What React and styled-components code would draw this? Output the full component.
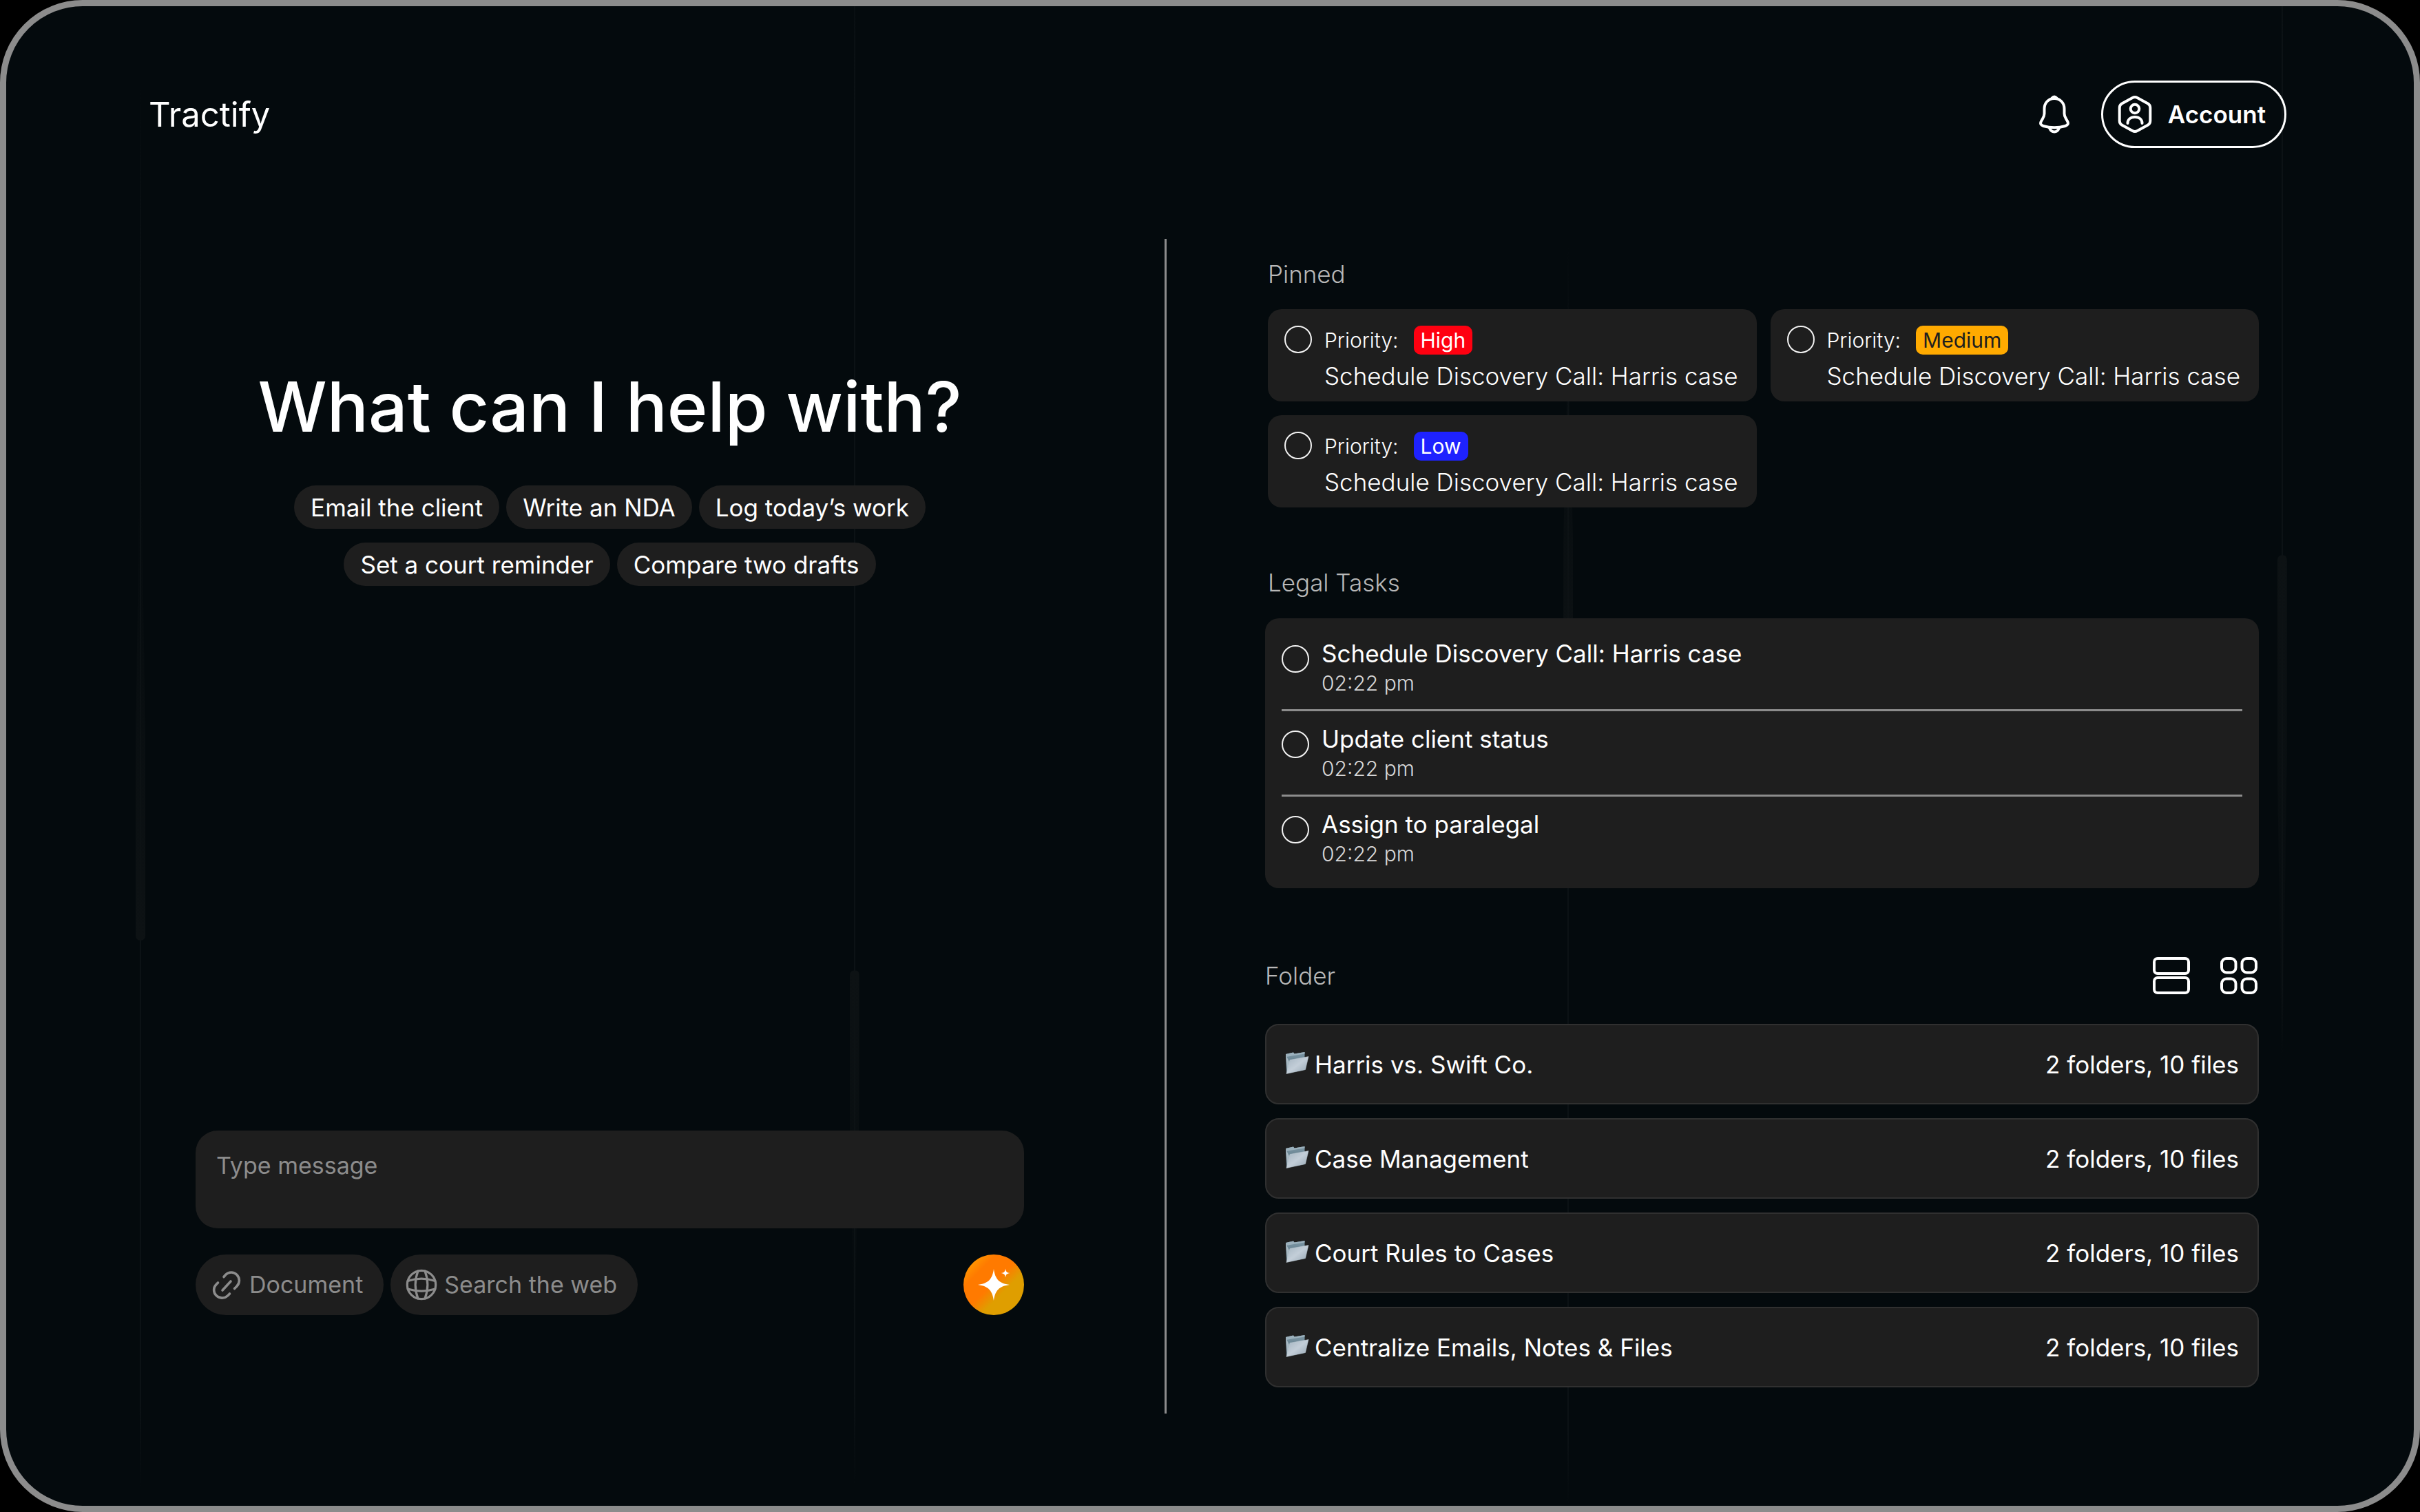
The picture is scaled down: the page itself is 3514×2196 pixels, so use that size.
import React, { useState } from "react";
import styled, { createGlobalStyle } from "styled-components";

const GlobalStyle = createGlobalStyle`
  *, *::before, *::after { box-sizing: border-box; }
  body {
    margin: 0;
    background: #000;
    color: #fff;
    font-family: Inter, "Noto Sans", sans-serif;
    font-size: 35px;
    line-height: 44px;
  }
  button, textarea, input { font: inherit; color: inherit; margin: 0; }
  button { cursor: pointer; border: 0; padding: 0; background: none; }
  ul, h1, h2, p { margin: 0; padding: 0; list-style: none; font-weight: inherit; }
  a { color: inherit; text-decoration: none; }
`;

const Frame = styled.div`
  position: relative;
  isolation: isolate;
  overflow: hidden;
  min-height: 100vh;
  display: flex;
  flex-direction: column;
  padding: 108px 0 134px;
  background: #040a0d;
  border: 9px solid #8c8c8c;
  border-radius: 120px;
`;

const Backdrop = styled.div`
  position: absolute;
  inset: 0;
  z-index: -1;
`;

const Rail = styled.span`
  position: absolute;
  left: ${(p) => p.$left};
  top: ${(p) => p.$from};
  bottom: ${(p) => p.$to};
  width: 2px;
  background: linear-gradient(transparent, #0c1215 15%, #0c1215 94%, transparent);
`;

const Beam = styled.span`
  position: absolute;
  left: ${(p) => p.$left};
  top: ${(p) => p.$top};
  height: ${(p) => p.$height};
  width: 14px;
  margin-left: -6px;
  border-radius: 7px;
  background: linear-gradient(${(p) => (p.$up ? "to top" : "to bottom")}, #0d1214, transparent);
  clip-path: ${(p) =>
    p.$up ? "polygon(45% 0, 55% 0, 100% 60%, 100% 100%, 0 100%, 0 60%)" : "polygon(0 0, 100% 0, 100% 40%, 55% 100%, 45% 100%, 0 40%)"};
`;

const Header = styled.header`
  display: flex;
  align-items: center;
  justify-content: space-between;
  padding: 0 185px 0 207px;
`;

const Brand = styled.a`
  padding-top: 2px;
  font-size: 49px;
  line-height: 60px;
`;

const HeaderActions = styled.div`
  display: flex;
  align-items: center;
  gap: 46px;
`;

const IconButton = styled.button`
  display: flex;
`;

const AccountButton = styled.button`
  display: flex;
  align-items: center;
  gap: 18px;
  height: 98px;
  padding: 0 27px 0 16px;
  border: 3px solid #fff;
  border-radius: 49px;
  font-weight: 600;
`;

const Main = styled.main`
  flex: 1;
  display: grid;
  grid-template-columns: 1407fr 3px 1586fr;
  margin-top: 132px;
  padding: 0 225px 0 275px;
`;

const Assistant = styled.section`
  display: flex;
  flex-direction: column;
  justify-content: space-between;
  padding: 184px 204px 143px 0;
`;

const Divider = styled.div`
  background: #8c8c8c;
`;

const Workspace = styled.div`
  padding: 29px 0 0 143px;
`;

const Title = styled.h1`
  font-size: 100px;
  line-height: 120px;
  font-weight: 500;
  text-align: center;
`;

const Chips = styled.div`
  display: flex;
  flex-wrap: wrap;
  justify-content: center;
  gap: 20px 10px;
  max-width: 960px;
  margin: 54px auto 0;
`;

const Chip = styled.button`
  height: 63px;
  padding: 0 24px;
  border-radius: 32px;
  background: #1e1e1e;
`;

const Message = styled.textarea`
  display: block;
  width: 100%;
  height: 142px;
  padding: 29px 30px;
  border: 0;
  border-radius: 32px;
  background: #1e1e1e;
  font-size: 34px;
  resize: none;
  outline: none;
  &::placeholder { color: #8c8c8c; opacity: 1; }
`;

const Tools = styled.div`
  display: flex;
  align-items: center;
  gap: 10px;
  margin-top: 38px;
`;

const Tool = styled.button`
  display: flex;
  align-items: center;
  gap: 8px;
  height: 88px;
  padding: 0 30px 0 20px;
  border-radius: 44px;
  background: #1e1e1e;
  color: #8c8c8c;
  font-size: 34px;
`;

const Send = styled.button`
  width: 88px;
  height: 88px;
  margin-left: auto;
  border-radius: 50%;
  background: linear-gradient(135deg, #ffa600 5%, #ff7a00 27%, #ff7a00 48%, #df9e00 64%);
  svg { display: block; }
`;

const SectionTitle = styled.h2`
  font-size: 35px;
  font-weight: 300;
  color: #b8b8b8;
  padding-left: ${(p) => (p.$indent ? "4px" : "0")};
`;

const PinnedGrid = styled.ul`
  display: grid;
  grid-template-columns: 1fr 1fr;
  gap: 20px;
  margin: 29px 0 87px;
  padding-left: 4px;
`;

const PinnedCard = styled.li`
  display: flex;
  gap: 18px;
  height: 134px;
  padding: 24px 24px 16px;
  border-radius: 20px;
  background: #1e1e1e;
`;

const Check = styled.input`
  appearance: none;
  flex: none;
  width: 40px;
  height: 40px;
  border: 2px solid #f2f2f2;
  border-radius: 50%;
  &:checked { background: #8c8c8c; }
`;

const PinnedBody = styled.label`
  display: grid;
  gap: 10px;
  white-space: nowrap;
  line-height: 42px;
  font-weight: 300;
`;

const Priority = styled.span`
  display: flex;
  gap: 22px;
  font-size: 30px;
`;

const tones = {
  High: ["#ff0010", "#fff"],
  Medium: ["#ffaa00", "#1e1e1e"],
  Low: ["#1e22ff", "#fff"],
};

const Tag = styled.span`
  padding: 0 10px;
  border-radius: 10px;
  font-weight: 400;
  background: ${(p) => tones[p.$level][0]};
  color: ${(p) => tones[p.$level][1]};
`;

const TaskPanel = styled.ul`
  margin: 30px 0 97px;
  padding: 11px 24px 12px;
  border-radius: 20px;
  background: #1e1e1e;
`;

const TaskRow = styled.li`
  display: flex;
  gap: 18px;
  padding: 18px 0 20px;
  & + & { border-top: 3px solid #8c8c8c; }
  ${Check} { margin-top: 10px; }
`;

const TaskBody = styled.label`
  display: grid;
  gap: 3px;
`;

const Time = styled.span`
  color: #d8d8d8;
  font-size: 30px;
  font-weight: 300;
  line-height: 36px;
`;

const FolderHeader = styled.div`
  display: flex;
  align-items: center;
  justify-content: space-between;
  height: 60px;
`;

const ViewSwitch = styled.div`
  display: flex;
  gap: 44px;
  padding-right: 2px;
`;

const FolderList = styled.ul`
  display: grid;
  gap: 20px;
  margin-top: 40px;
`;

const FolderRow = styled.a`
  display: flex;
  align-items: center;
  gap: 8px;
  height: 117px;
  padding: 0 27px;
  border: 2px solid #303030;
  border-radius: 20px;
  background: #1e1e1e;
`;

const Count = styled.span`
  margin-left: auto;
`;

const BellIcon = () => (
  <svg width="44" height="56" viewBox="0 0 44 56" fill="none" stroke="#fff" strokeWidth="4" strokeLinecap="round" strokeLinejoin="round">
    <path d="M22 5C13 5 7.500 12 7.500 20V27C7.500 30 6.500 32 5 34.500L3 38C1 41.500 2.500 44 6 45C16.500 48 27.500 48 38 45C41.500 44 43 41.500 41 38L39 34.500C37.500 32 36.500 30 36.500 27V20C36.500 12 31 5 22 5Z" />
    <path d="M18.500 4.500Q22 .500 25.500 4.500" />
    <path d="M15 48C16.500 51.500 19 53.500 22 53.500S27.500 51.500 29 48" />
  </svg>
);

const AccountIcon = () => (
  <svg width="60" height="60" viewBox="0 0 60 60" fill="none" stroke="#fff" strokeWidth="4" strokeLinecap="round" strokeLinejoin="round">
    <path d="M33.500 6L49 14.500Q52.300 16.500 52.300 20.500V39.500Q52.300 43.500 49 45.500L33.500 54Q30 56 26.500 54L11 45.500Q7.700 43.500 7.700 39.500V20.500Q7.700 16.500 11 14.500L26.500 6Q30 4 33.500 6Z" />
    <circle cx="30" cy="22" r="6.300" />
    <path d="M19.500 43C19.500 37.500 23.500 34 30 34S40.500 37.500 40.500 43" />
  </svg>
);

const LinkIcon = () => (
  <svg width="50" height="50" viewBox="0 0 50 50" fill="none" stroke="currentColor" strokeWidth="3.600" strokeLinecap="round">
    <path d="M19 33L31 20" />
    <path d="M21 13.500L23.500 10.500C28 6 35 5.500 40 10.500C44.500 15.500 44.500 22 40 27L36.500 30.500" />
    <path d="M12.500 22L10 24.500C5.500 29 5.500 36 10 40.500C14.500 45 21.500 45.500 26.500 41L29.500 38" />
  </svg>
);

const GlobeIcon = () => (
  <svg width="50" height="50" viewBox="0 0 50 50" fill="none" stroke="currentColor" strokeWidth="3.200" strokeLinecap="round">
    <circle cx="25" cy="25" r="20.700" />
    <path d="M20 5C15 18 15 32 20 45" />
    <path d="M30 5C35 18 35 32 30 45" />
    <path d="M5 19.500C18 15 32 15 45 19.500" />
    <path d="M5 31C18 35 32 35 45 31" />
  </svg>
);

const SparkIcon = () => (
  <svg width="88" height="88" viewBox="0 0 88 88" fill="#fff">
    <path d="M44 21C46 36 52 42 67 44C52 46 46 52 44 67C42 52 36 46 21 44C36 42 42 36 44 21Z" />
    <path d="M61 20.500C61.600 25 63 26.500 67.500 27C63 27.600 61.600 29 61 33.500C60.400 29 59 27.600 54.500 27C59 26.500 60.400 25 61 20.500Z" />
  </svg>
);

const ListIcon = () => (
  <svg width="54" height="54" viewBox="0 0 54 54" fill="none" stroke="#fff" strokeWidth="4">
    <rect x="2" y="2" width="50" height="22" rx="5" />
    <rect x="2" y="30" width="50" height="22" rx="5" />
  </svg>
);

const GridIcon = () => (
  <svg width="54" height="54" viewBox="0 0 54 54" fill="none" stroke="#fff" strokeWidth="4">
    <rect x="2" y="2" width="20.500" height="20.500" rx="7" />
    <rect x="31.500" y="2" width="20.500" height="20.500" rx="7" />
    <rect x="2" y="31.500" width="20.500" height="20.500" rx="7" />
    <rect x="31.500" y="31.500" width="20.500" height="20.500" rx="7" />
  </svg>
);

const FolderIcon = () => (
  <svg width="35" height="36" viewBox="0 0 35 36">
    <defs>
      <linearGradient id="folderBack" x1="0" y1="0" x2="0" y2="1">
        <stop offset="0" stopColor="#7e98a6" />
        <stop offset="1" stopColor="#4d6877" />
      </linearGradient>
      <linearGradient id="folderFront" x1="0" y1="0" x2="1" y2="1">
        <stop offset="0" stopColor="#a3b3bf" />
        <stop offset=".5" stopColor="#c3ced8" />
        <stop offset="1" stopColor="#94a5b2" />
      </linearGradient>
    </defs>
    <path d="M1 3L12 .500L13.500 2.500L28.500 0V26L2 31Z" fill="url(#folderBack)" />
    <path d="M1 3L12 .500L13.500 2.500L28.500 0V2.500L13 5L1.500 7Z" fill="#9bb0bc" />
    <path d="M1 4L3 30L6 14Z" fill="#a9bac4" />
    <path d="M7 11.500L34 6.500L29.500 25.500L2 31.500Z" fill="url(#folderFront)" stroke="#c3ced6" strokeWidth=".5" />
  </svg>
);

const suggestions = ["Email the client", "Write an NDA", "Log today’s work", "Set a court reminder", "Compare two drafts"];
const pinned = ["High", "Medium", "Low"];
const tasks = ["Schedule Discovery Call: Harris case", "Update client status", "Assign to paralegal"];
const folders = ["Harris vs. Swift Co.", "Case Management", "Court Rules to Cases", "Centralize Emails, Notes & Files"];

export default function App() {
  const [message, setMessage] = useState("");
  return (
    <>
      <GlobalStyle />
      <Frame>
        <Backdrop aria-hidden="true">
          <Rail $left="5.550%" $from="5%" $to="1%" />
          <Rail $left="35.200%" $from="-10%" $to="1%" />
          <Rail $left="64.850%" $from="16%" $to="0" />
          <Rail $left="94.500%" $from="-10%" $to="30%" />
          <Beam $left="5.550%" $top="29%" $height="33.300%" $up />
          <Beam $left="35.200%" $top="64.300%" $height="24%" />
          <Beam $left="64.850%" $top="22%" $height="23%" $up />
          <Beam $left="94.500%" $top="36.600%" $height="34%" />
        </Backdrop>
        <Header>
          <Brand href="#">Tractify</Brand>
          <HeaderActions>
            <IconButton aria-label="Notifications"><BellIcon /></IconButton>
            <AccountButton><AccountIcon />Account</AccountButton>
          </HeaderActions>
        </Header>
        <Main>
          <Assistant>
            <div>
              <Title>What can I help with?</Title>
              <Chips>
                {suggestions.map((s) => (
                  <Chip key={s} onClick={() => setMessage(s)}>{s}</Chip>
                ))}
              </Chips>
            </div>
            <form onSubmit={(e) => e.preventDefault()}>
              <Message aria-label="Message" placeholder="Type message" value={message} onChange={(e) => setMessage(e.target.value)} />
              <Tools>
                <Tool type="button"><LinkIcon />Document</Tool>
                <Tool type="button"><GlobeIcon />Search the web</Tool>
                <Send aria-label="Send"><SparkIcon /></Send>
              </Tools>
            </form>
          </Assistant>
          <Divider />
          <Workspace>
            <section>
              <SectionTitle $indent>Pinned</SectionTitle>
              <PinnedGrid>
                {pinned.map((level) => (
                  <PinnedCard key={level}>
                    <Check type="checkbox" id={"pin-" + level} />
                    <PinnedBody htmlFor={"pin-" + level}>
                      <Priority>Priority: <Tag $level={level}>{level}</Tag></Priority>
                      <span>Schedule Discovery Call: Harris case</span>
                    </PinnedBody>
                  </PinnedCard>
                ))}
              </PinnedGrid>
            </section>
            <section>
              <SectionTitle $indent>Legal Tasks</SectionTitle>
              <TaskPanel>
                {tasks.map((task, i) => (
                  <TaskRow key={task}>
                    <Check type="checkbox" id={"task-" + i} />
                    <TaskBody htmlFor={"task-" + i}>
                      <span>{task}</span>
                      <Time>02:22 pm</Time>
                    </TaskBody>
                  </TaskRow>
                ))}
              </TaskPanel>
            </section>
            <section>
              <FolderHeader>
                <SectionTitle>Folder</SectionTitle>
                <ViewSwitch>
                  <IconButton aria-label="List view"><ListIcon /></IconButton>
                  <IconButton aria-label="Grid view"><GridIcon /></IconButton>
                </ViewSwitch>
              </FolderHeader>
              <FolderList>
                {folders.map((name) => (
                  <li key={name}>
                    <FolderRow href="#">
                      <FolderIcon />
                      {name}
                      <Count>2 folders, 10 files</Count>
                    </FolderRow>
                  </li>
                ))}
              </FolderList>
            </section>
          </Workspace>
        </Main>
      </Frame>
    </>
  );
}
